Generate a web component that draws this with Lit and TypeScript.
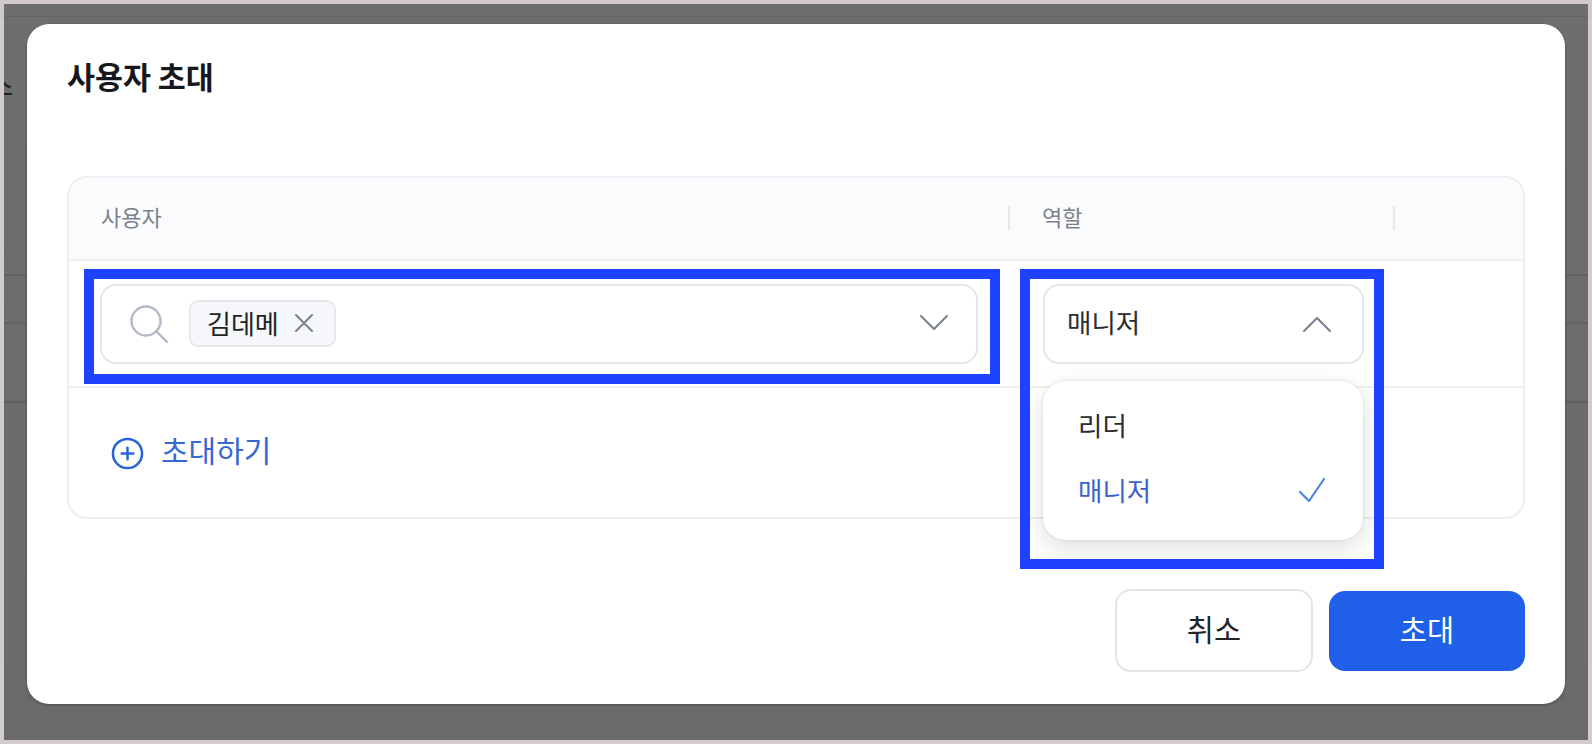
import { LitElement, html, css, svg } from "lit";
import { customElement } from "lit/decorators.js";

const icon = (w: number, h: number, vb: string, body: unknown, cls = "") =>
  html`<svg class=${cls} width=${w} height=${h} viewBox=${vb} fill="none" stroke="currentColor" stroke-linecap="round" stroke-linejoin="round">${body}</svg>`;

@customElement("app-root")
export class AppRoot extends LitElement {
  static styles = css`
    :host {
      display: block;
      width: 1592px;
      height: 744px;
      overflow: hidden;
      font-family: "Noto Sans CJK KR", "Noto Sans", sans-serif;
    }
    * { box-sizing: border-box; }
    .frame {
      width: 1592px;
      height: 744px;
      border: 4px solid #d1cccb;
      background:
        linear-gradient(#636363, #636363) 0 12px / 100% 1px no-repeat,
        linear-gradient(#626262, #626262) 0 270px / 100% 2px no-repeat,
        linear-gradient(#626262, #626262) 0 318px / 100% 2px no-repeat,
        linear-gradient(#606060, #606060) 0 397px / 100% 2px no-repeat,
        linear-gradient(#6e6e6e, #6a6a6a);
      padding: 20px 23px 36px;
      display: flex;
      position: relative;
      overflow: hidden;
    }
    .peek {
      position: absolute;
      left: -13px;
      top: 66px;
      font-size: 24px;
      line-height: 30px;
      font-weight: 500;
      color: #222;
    }
    .modal {
      flex: 1;
      background: #fff;
      border-radius: 22px;
      padding: 0 40px 32px 40px;
      display: flex;
      flex-direction: column;
      box-shadow: 0 1px 3px rgba(40, 40, 40, 0.45);
      position: relative;
    }
    h1 {
      margin: 0;
      height: 152px;
      padding-top: 27px;
      font-size: 30.4px;
      line-height: 50px;
      font-weight: 700;
      color: #16181c;
    }
    .table {
      height: 343px;
      border: 2px solid #eceef2;
      border-radius: 20px;
    }
    .head, .row {
      display: grid;
      grid-template-columns: 941px 385px 1fr;
    }
    .head {
      height: 83px;
      background: #fafbfd;
      border-bottom: 2px solid #eef0f3;
      border-radius: 18px 18px 0 0;
      align-items: center;
      font-size: 22px;
      color: #7b818c;
      padding-bottom: 2px;
    }
    .head > div {
      height: 24px;
      display: flex;
      align-items: center;
      padding: 0 0 4px 32px;
      border-right: 2px solid #e4e6ea;
    }
    .head > div:last-child { border: 0; }
    .row {
      height: 127px;
      border-bottom: 2px solid #f0f1f4;
      padding-top: 23px;
    }
    .cell {
      position: relative;
      padding-right: 32px;
    }
    .cell.user { padding-left: 31px; }
    .cell.role { padding-left: 33px; padding-right: 31px; }
    .box {
      height: 80px;
      border: 2px solid #e4e6ea;
      border-radius: 16px;
      background: #fff;
      display: flex;
      align-items: center;
      color: #2a2c31;
      font-size: 26.5px;
    }
    .box > span { padding-bottom: 6px; }
    .user .box { padding: 0 27px 2px 27px; }
    .role .box { padding: 0 30px 0 22px; justify-content: space-between; }
    .search { color: #b2b9c8; flex: none; margin-top: 2px; }
    .chip {
      margin-left: 20px;
      height: 47px;
      padding: 0 20px 0 16px;
      display: flex;
      align-items: center;
      gap: 15px;
      background: #f6f7fa;
      border: 2px solid #e6e8ed;
      border-radius: 9px;
      font-size: 26px;
      color: #212327;
    }
    .chip span { padding-bottom: 2px; }
    .chip svg { color: #7b818f; }
    .spacer { flex: 1; }
    .chev { color: #7a8090; flex: none; }
    .mark {
      position: absolute;
      border: 10px solid #1f42ff;
      pointer-events: none;
    }
    .mark.user { left: 15px; right: 10px; top: -15px; height: 115px; }
    .mark.role { left: 10px; right: 11px; top: -15px; height: 300px; }
    .menu {
      position: absolute;
      left: 33px;
      right: 32px;
      top: 97px;
      height: 159px;
      background: #fff;
      border-radius: 22px;
      box-shadow: 0 0 2px rgba(60, 64, 75, 0.22), 0 8px 24px rgba(60, 64, 75, 0.17);
      padding: 11px 38px 0 35px;
      font-size: 26.5px;
      z-index: 1;
    }
    .opt {
      height: 65px;
      display: flex;
      align-items: center;
      justify-content: space-between;
      color: #2a2c31;
    }
    .opt.on { color: #3a62c8; }
    .opt svg { color: #4b85e2; margin-right: -1px; }
    .add {
      display: inline-flex;
      align-items: center;
      gap: 17px;
      margin: 40px 0 0 42px;
      font-size: 30px;
      line-height: 40px;
      color: #3768d2;
    }
    .add svg { color: #2a64d8; margin-top: 9px; }
    .foot {
      margin-top: auto;
      display: flex;
      justify-content: flex-end;
      gap: 16px;
      align-items: center;
    }
    button {
      font: inherit;
      font-size: 29.5px;
      font-weight: 400;
      width: 198px;
      height: 83px;
      border-radius: 16px;
      padding: 0 0 6px;
    }
    .ghost {
      background: #fff;
      border: 2px solid #e2e4e9;
      color: #22242a;
    }
    .primary {
      width: 196px;
      background: #2060e8;
      border: 0;
      color: #fff;
      height: 80px;
    }
  `;

  render() {
    return html`
      <div class="frame">
        <span class="peek">스</span>
        <div class="modal">
          <h1>사용자 초대</h1>
          <div class="table">
            <div class="head">
              <div>사용자</div>
              <div>역할</div>
              <div></div>
            </div>
            <div class="row">
              <div class="cell user">
                <div class="box">
                  ${icon(40, 40, "0 0 40 40", svg`<circle cx="17" cy="17" r="14.5" stroke-width="2.4"/><path d="M27.5 27.5 38 38" stroke-width="2.4"/>`, "search")}
                  <div class="chip">
                    <span>김데메</span>
                    ${icon(20, 20, "0 0 20 20", svg`<path d="M2 2 18 18M18 2 2 18" stroke-width="2"/>`)}
                  </div>
                  <div class="spacer"></div>
                  ${icon(30, 18, "0 0 30 18", svg`<path d="M2 2 15 15 28 2" stroke-width="2"/>`, "chev")}
                </div>
                <div class="mark user"></div>
              </div>
              <div class="cell role">
                <div class="box">
                  <span>매니저</span>
                  ${icon(30, 18, "0 0 30 18", svg`<path d="M2 16 15 3 28 16" stroke-width="2"/>`, "chev")}
                </div>
                <div class="menu">
                  <div class="opt">리더</div>
                  <div class="opt on">
                    <span>매니저</span>
                    ${icon(28, 26, "0 0 28 26", svg`<path d="M2 15 11 24 26 2" stroke-width="2.2"/>`)}
                  </div>
                </div>
                <div class="mark role"></div>
              </div>
              <div></div>
            </div>
            <div class="add">
              ${icon(33, 33, "0 0 34 34", svg`<circle cx="17" cy="17" r="15" stroke-width="2.6"/><path d="M17 11v12M11 17h12" stroke-width="2.6"/>`)}
              <span>초대하기</span>
            </div>
          </div>
          <div class="foot">
            <button class="ghost">취소</button>
            <button class="primary">초대</button>
          </div>
        </div>
      </div>
    `;
  }
}
